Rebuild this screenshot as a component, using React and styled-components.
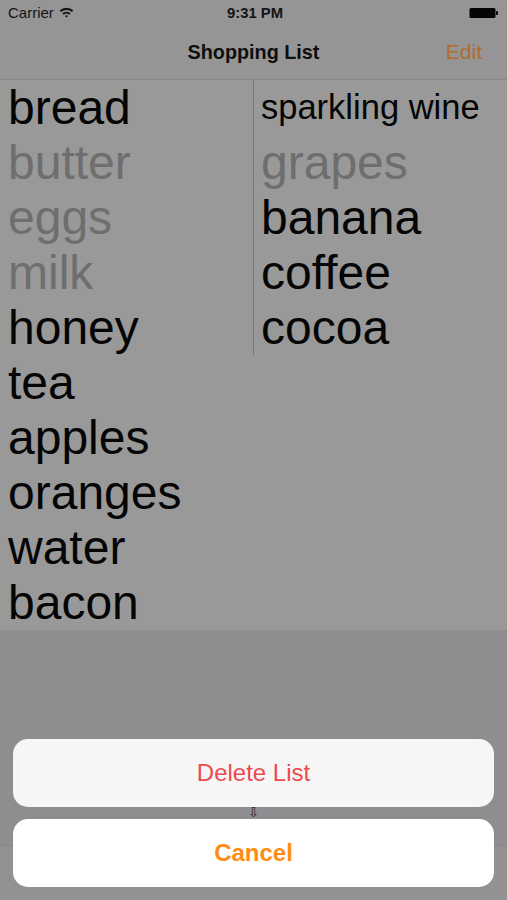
import React from "react";
import styled, { createGlobalStyle } from "styled-components";

const Global = createGlobalStyle`
  html, body { margin: 0; padding: 0; }
  body {
    width: 507px;
    height: 900px;
    overflow: hidden;
    font-family: "Liberation Sans", Arial, sans-serif;
    background: #8e8e90;
  }
`;

const Screen = styled.div`
  position: relative;
  width: 507px;
  height: 900px;
  display: flex;
  flex-direction: column;
  background: #8e8e90;
`;

const TopBars = styled.div`
  background: #959595;
  border-bottom: 1px solid #878787;
`;

const StatusBar = styled.div`
  height: 25px;
  display: grid;
  grid-template-columns: 1fr auto 1fr;
  align-items: center;
  padding: 0 8px;
  font-size: 15px;
  color: #141414;
`;

const StatusLeft = styled.div`
  display: flex;
  align-items: center;
  gap: 5px;
`;

const StatusTime = styled.div`
  font-weight: 700;
  font-size: 14.8px;
  margin-left: 3px;
`;

const StatusRight = styled.div`
  display: flex;
  justify-content: flex-end;
  align-items: center;
`;

const NavBar = styled.div`
  height: 54px;
  display: grid;
  grid-template-columns: 1fr auto 1fr;
  align-items: center;
  padding: 0 25px;
`;

const NavTitle = styled.div`
  font-size: 19.8px;
  font-weight: 700;
  color: #0e0e0e;
`;

const NavButton = styled.div`
  justify-self: end;
  font-size: 21px;
  color: #b06d2e;
`;

const Content = styled.div`
  display: grid;
  grid-template-columns: 253px 254px;
  align-items: start;
  background: #999999;
`;

const Column = styled.div`
  display: flex;
  flex-direction: column;
  ${(p) => (p.$divided ? "border-left: 1px solid #777777; padding-left: 7px;" : "padding-left: 8px;")}
`;

const Item = styled.div`
  height: 55px;
  line-height: 55px;
  font-size: ${(p) => (p.$small ? "34.5px" : "48px")};
  color: ${(p) => (p.$done ? "#6e6e6e" : "#050505")};
  white-space: nowrap;
`;

const Spacer = styled.div`
  flex: 1;
`;

const Toolbar = styled.div`
  height: 54px;
  background: #929292;
  border-top: 1px solid #888888;
`;

const Sheet = styled.div`
  position: absolute;
  left: 13px;
  right: 13px;
  bottom: 13px;
  display: flex;
  flex-direction: column;
`;

const SheetButton = styled.div`
  height: 68px;
  border-radius: 15px;
  display: flex;
  align-items: center;
  justify-content: center;
  font-size: 24px;
  background: ${(p) => (p.$cancel ? "#ffffff" : "#f6f6f6")};
  color: ${(p) => (p.$cancel ? "#ff8c12" : "#ec4a50")};
  font-weight: ${(p) => (p.$cancel ? 700 : 400)};
`;

const SheetGap = styled.div`
  height: 12px;
  display: flex;
  justify-content: center;
  align-items: center;
  font-family: "DejaVu Sans", sans-serif;
  font-size: 13px;
  line-height: 12px;
  color: #1a1a1a;
`;

const Wifi = () => (
  <svg width="15" height="11" viewBox="0 0 15 11">
    <path d="M0.6 3.6 A10 10 0 0 1 14.4 3.6 L12.9 5.1 A8 8 0 0 0 2.1 5.1 Z" fill="#141414" />
    <path d="M3.3 6.3 A6.2 6.2 0 0 1 11.7 6.3 L10.2 7.8 A4.1 4.1 0 0 0 4.8 7.8 Z" fill="#141414" />
    <path d="M6 9 A2.2 2.2 0 0 1 9 9 L7.5 10.6 Z" fill="#141414" />
  </svg>
);

const Battery = () => (
  <svg width="30" height="12" viewBox="0 0 30 12">
    <rect x="0.5" y="1" width="26" height="10" rx="1.5" fill="#050505" />
    <rect x="27" y="4" width="2" height="4" rx="0.8" fill="#050505" />
  </svg>
);

const left = [
  ["bread", false],
  ["butter", true],
  ["eggs", true],
  ["milk", true],
  ["honey", false],
  ["tea", false],
  ["apples", false],
  ["oranges", false],
  ["water", false],
  ["bacon", false],
];

const right = [
  ["sparkling wine", false, true],
  ["grapes", true],
  ["banana", false],
  ["coffee", false],
  ["cocoa", false],
];

export default function App() {
  return (
    <Screen>
      <Global />
      <TopBars>
        <StatusBar>
          <StatusLeft>
            <span>Carrier</span>
            <Wifi />
          </StatusLeft>
          <StatusTime>9:31 PM</StatusTime>
          <StatusRight>
            <Battery />
          </StatusRight>
        </StatusBar>
        <NavBar>
          <span />
          <NavTitle>Shopping List</NavTitle>
          <NavButton>Edit</NavButton>
        </NavBar>
      </TopBars>
      <Content>
        <Column>
          {left.map(([t, d]) => (
            <Item key={t} $done={d}>
              {t}
            </Item>
          ))}
        </Column>
        <Column $divided>
          {right.map(([t, d, s]) => (
            <Item key={t} $done={d} $small={s}>
              {t}
            </Item>
          ))}
        </Column>
      </Content>
      <Spacer />
      <Toolbar />
      <Sheet>
        <SheetButton>Delete List</SheetButton>
        <SheetGap>⇩</SheetGap>
        <SheetButton $cancel>Cancel</SheetButton>
      </Sheet>
    </Screen>
  );
}
